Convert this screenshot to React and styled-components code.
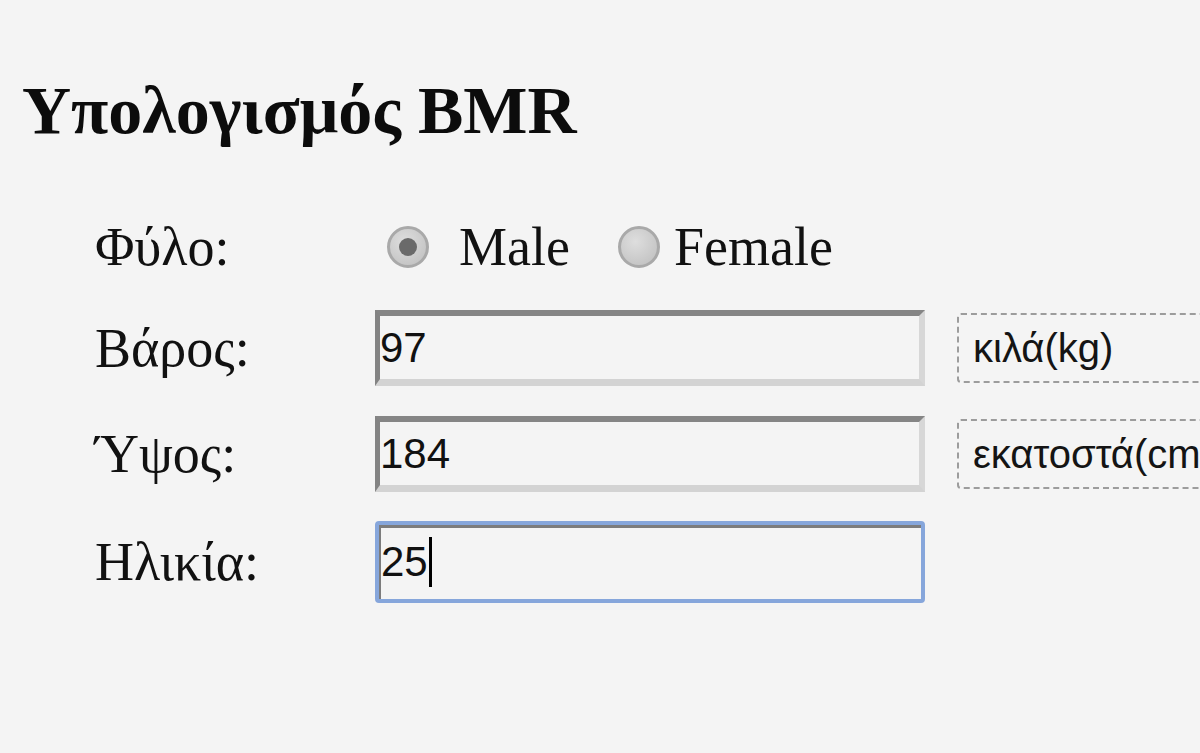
import styled, { createGlobalStyle } from "styled-components";

const Global = createGlobalStyle`
  html, body {
    margin: 0;
    background: #f4f4f4;
    overflow: hidden;
  }
`;

const Page = styled.div`
  width: 1200px;
  height: 753px;
  padding: 76px 0 0 22px;
  box-sizing: border-box;
  overflow: hidden;
  font-family: "Liberation Serif", "Times New Roman", serif;
  color: #111;
`;

const Title = styled.h2`
  margin: 0;
  font-size: 68px;
  line-height: 68px;
  font-weight: bold;
  color: #0c0c0c;
  white-space: nowrap;
`;

const Form = styled.div`
  margin: 70px 0 0 73px;
  display: flex;
  flex-direction: column;
  gap: 30px;
`;

const Row = styled.div`
  display: flex;
  align-items: center;
  height: ${(p) => p.$h || 76}px;
`;

const Label = styled.div`
  width: 280px;
  flex: none;
  font-size: 54px;
  line-height: 1;
  white-space: nowrap;
`;

const Option = styled.label`
  display: flex;
  align-items: center;
  font-size: 54px;
  line-height: 1;
`;

const Radio = styled.span`
  width: 42px;
  height: 42px;
  box-sizing: border-box;
  border-radius: 50%;
  border: 3px solid #a9a9a9;
  background: radial-gradient(circle at 40% 35%, #dedede, #bdbdbd);
  margin: 0 ${(p) => p.$gap}px 0 ${(p) => p.$lead}px;
  display: flex;
  align-items: center;
  justify-content: center;
  &::after {
    content: "";
    display: ${(p) => (p.$checked ? "block" : "none")};
    width: 18px;
    height: 18px;
    border-radius: 50%;
    background: #6a6a6a;
  }
`;

const Field = styled.div`
  width: 550px;
  height: 76px;
  flex: none;
  box-sizing: border-box;
  display: flex;
  align-items: center;
  font-family: "Liberation Sans", Arial, sans-serif;
  font-size: 42px;
  color: #111;
  background: #f4f4f4;
  border-style: solid;
  border-width: 6px 6px 7px 5px;
  border-color: #858585 #d7d7d7 #d3d3d3 #838383;
  ${(p) =>
    p.$focused &&
    `
    height: 82px;
    border: 4px solid #86a6db;
    border-radius: 4px;
    box-shadow: inset 2px 3px 0 #7c7c7c;
    padding-left: 2px;
  `}
`;

const Caret = styled.span`
  width: 3px;
  height: 50px;
  background: #000;
  margin-left: 1px;
`;

const Unit = styled.div`
  margin-left: 32px;
  width: 300px;
  height: 70px;
  flex: none;
  box-sizing: border-box;
  border: 2px dashed #9c9c9c;
  border-radius: 4px;
  display: flex;
  align-items: center;
  padding-left: 14px;
  font-family: "Liberation Sans", Arial, sans-serif;
  font-size: 40px;
  color: #141414;
  white-space: nowrap;
  overflow: hidden;
`;

export default function App() {
  return (
    <Page>
      <Global />
      <Title>Υπολογισμός BMR</Title>
      <Form>
        <Row $h={66}>
          <Label>Φύλο:</Label>
          <Option>
            <Radio $checked $lead={12} $gap={30} />
            Male
          </Option>
          <Option>
            <Radio $lead={48} $gap={14} />
            Female
          </Option>
        </Row>
        <Row>
          <Label>Βάρος:</Label>
          <Field>97</Field>
          <Unit>κιλά(kg)</Unit>
        </Row>
        <Row>
          <Label>Ύψος:</Label>
          <Field>184</Field>
          <Unit>εκατοστά(cm)</Unit>
        </Row>
        <Row $h={80}>
          <Label>Ηλικία:</Label>
          <Field $focused>
            25
            <Caret />
          </Field>
        </Row>
      </Form>
    </Page>
  );
}
